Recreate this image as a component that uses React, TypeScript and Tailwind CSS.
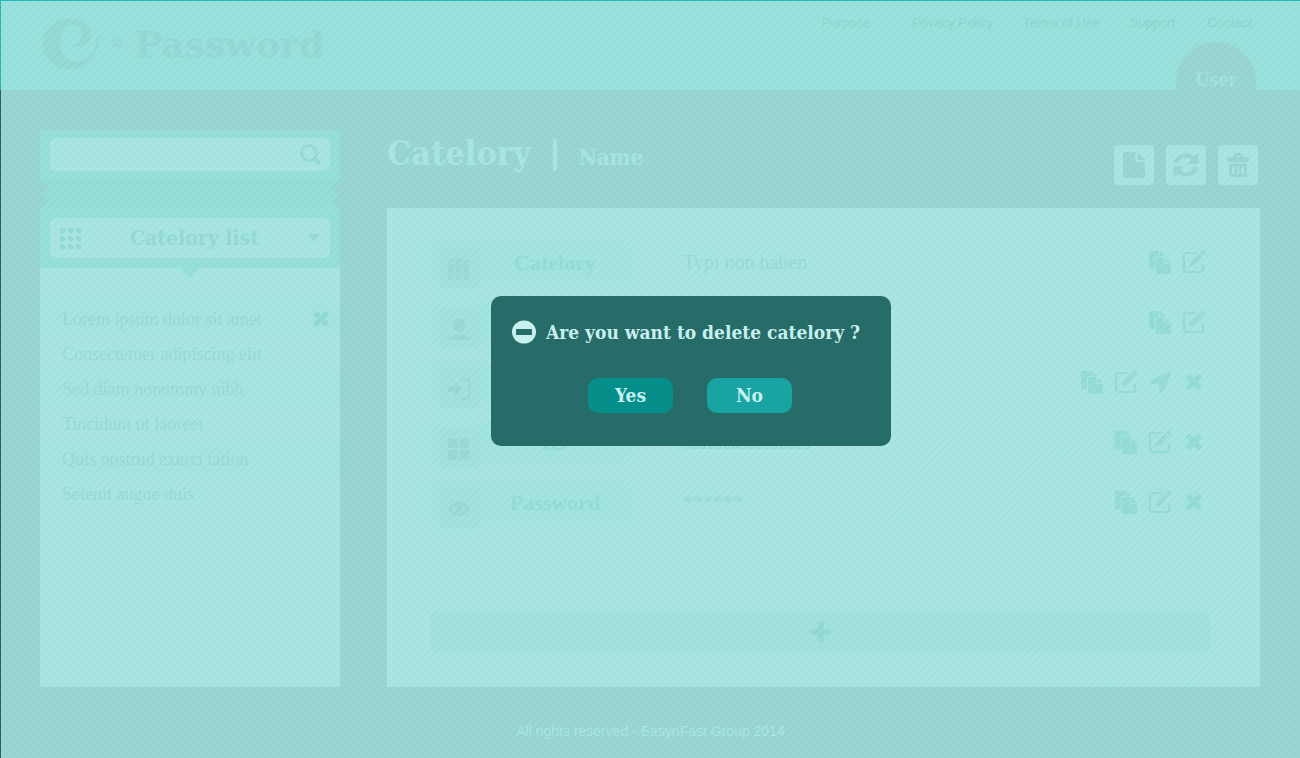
import React from "react";
import { FaLocationArrow } from "react-icons/fa";

const slab = "font-['DejaVu_Serif_Condensed','DejaVu_Serif',serif] font-bold";

const logoPath =
  "M29 3C14 3 3 13 3 27C3 42 14 53 29 53C47 53 58 41 60 20L58 20C56 35 49 45 37 45C26 45 20 38 20 27C20 15 25 9 33 9C40 9 42 12 42 17C42 24 38 29 31 30C42 33 51 28 51 19C51 9 42 3 29 3z";

function Edit() {
  return (
    <svg viewBox="0 0 24 24" className="size-6" fill="none" stroke="currentColor" aria-hidden="true">
      <path d="M14 3H4.500Q2 3 2 5.500V19.500Q2 22 4.500 22H18.500Q21 22 21 19.500V14" strokeWidth="2.200" />
      <path d="M7 17l2-5.500 8-8 3.500 3.500-8 8z" fill="currentColor" stroke="none" />
      <path d="M18 2.500l1.500-1.500q1.500-1 3 .5t.5 3L21.500 6z" fill="currentColor" stroke="none" />
    </svg>
  );
}

function Copy() {
  return (
    <svg viewBox="0 0 24 24" className="size-6" fill="currentColor" aria-hidden="true">
      <path d="M2 1h9v5H8.500Q7 6 7 7.500V19H2Q1 19 1 18V2Q1 1 2 1zM12 1l5 5h-5z" />
      <path d="M9 7h7v7H23v9q0 1-1 1H9q-1 0-1-1V8q0-1 1-1zM17 7.500l6 5.500h-6z" />
    </svg>
  );
}

function Cross() {
  return (
    <svg viewBox="0 0 18 18" className="size-[18px]" fill="none" stroke="currentColor" strokeWidth="5.500" aria-hidden="true">
      <path d="M2.500 2.500L15.500 15.500M15.500 2.500L2.500 15.500" />
    </svg>
  );
}

function Plus() {
  return (
    <svg viewBox="0 0 20 20" className="size-5" fill="currentColor" aria-hidden="true">
      <path d="M8 0h4q1 0 1 1v6h6q1 0 1 1v4q0 1-1 1h-6v6q0 1-1 1H8q-1 0-1-1v-6H1q-1 0-1-1V8q0-1 1-1h6V1q0-1 1-1z" />
    </svg>
  );
}

function Search() {
  return (
    <svg viewBox="0 0 22 22" className="size-[22px]" fill="none" stroke="currentColor" aria-hidden="true">
      <circle cx="9" cy="9" r="7.500" strokeWidth="2.500" />
      <path d="M14.500 14.500L20 20" strokeWidth="4" />
    </svg>
  );
}

function File() {
  return (
    <svg viewBox="0 0 22 26" className="h-[26px] w-[22px]" fill="currentColor" aria-hidden="true">
      <path d="M1.500 0H12.500V10H22V24.500Q22 26 20.500 26H1.500Q0 26 0 24.500V1.500Q0 0 1.500 0zM14.500 0L22 8H14.500z" />
    </svg>
  );
}

function Refresh() {
  return (
    <svg viewBox="0 0 26 26" className="size-6.5" fill="currentColor" aria-hidden="true">
      <path d="M1 11C2 5 7 1.500 13 1.500c3.500 0 6 1.200 8 3.300L25.500 1v11H15l3.500-3.700C17 6.500 15 5.500 13 5.500c-4 0-6.500 2-7.500 5.500z" />
      <path d="M25 15c-1 6-6 9.500-12 9.500-3.500 0-6-1.200-8-3.300L.5 25V14H11l-3.500 3.700c1.500 1.800 3.500 2.800 5.500 2.800 4 0 6.500-2 7.500-5.500z" />
    </svg>
  );
}

function Trash() {
  return (
    <svg viewBox="0 0 24 26" className="h-6.5 w-6" fill="currentColor" fillRule="evenodd" aria-hidden="true">
      <path d="M7.500 5V3.500Q7.500 1 10 1h4q2.500 0 2.500 2.500V5H21q2 0 2 2v3H1V7q0-2 2-2zM10 5h4V3.500h-4z" />
      <path d="M3 11.500h18V23q0 2-2 2H5q-2 0-2-2zM6 14.500V22h2.500v-7.500zM10.800 14.500V22h2.500v-7.500zM15.500 14.500V22H18v-7.500z" />
    </svg>
  );
}

const rowIcons: Record<string, React.ReactNode> = {
  books: (
    <path d="M1 2h6v3H1zM1 6h6v11H1zM1 18h6v1.500H1zM1 20.500h6V23H1zM8.500 1h6.500v3H8.500zM8.500 5h6.500v12H8.500zM8.500 18h6.500v1.500H8.500zM8.500 20.500h6.500V23H8.500zM16.500 3H23v3h-6.500zM16.500 7H23v10h-6.500zM16.500 18H23v1.500h-6.500zM16.500 20.500H23V23h-6.500z" />
  ),
  person: (
    <>
      <ellipse cx="13" cy="8" rx="6" ry="7.500" />
      <path d="M1 23c1-4 5-4 8-5.500q4 2 8 0c3 1.500 6 1.500 7 5.500z" />
    </>
  ),
  enter: (
    <>
      <path d="M1 9h7V4l7.500 8L8 20v-5H1z" />
      <path d="M14 2h7q2 0 2 2v16q0 2-2 2h-7" fill="none" stroke="currentColor" strokeWidth="2" />
    </>
  ),
  grid: (
    <path d="M2 1h9v10H1V2q0-1 1-1zM13 1h9q1 0 1 1v9H13zM1 13h10v10H2q-1 0-1-1zM13 13h10v9q0 1-1 1h-9z" />
  ),
  eye: (
    <path fillRule="evenodd" d="M1 12C4 7 8 4.500 12.500 4.500S21 7 24 12c-3 5-7 7.500-11.500 7.500S4 17 1 12zM5 12c2 3.500 4.500 5 7.500 5s5.500-1.500 7.500-5c-2-3.500-4.500-5-7.500-5S7 8.500 5 12zM12.500 8a4 4 0 1 0 .01 8 4 4 0 1 0-.01-8z" />
  ),
};

const rows = [
  { icon: "books", label: "Catelory", value: "Typi non haben", actions: ["Copy", "Edit"] },
  { icon: "person", label: "", value: "", actions: ["Copy", "Edit"] },
  { icon: "enter", label: "", value: "", actions: ["Copy", "Edit", "Open", "Delete"] },
  { icon: "grid", label: "ID", value: "namkschemmes", actions: ["Copy", "Edit", "Delete"] },
  { icon: "eye", label: "Password", value: "******", actions: ["Copy", "Edit", "Delete"] },
];

const actionIcons: Record<string, React.ReactNode> = {
  Copy: <Copy />,
  Edit: <Edit />,
  Open: <FaLocationArrow className="size-[21px]" />,
  Delete: <Cross />,
};

const items = [
  "Lorem ipsum dolor sit amet",
  "Consectetuer adipiscing elit",
  "Sed diam nonummy nibh",
  "Tincidunt ut laoreet",
  "Quis nostrud exerci tation",
  "Selenit augue duis",
];

function Header() {
  return (
    <header className="relative flex h-[90px] items-start justify-between border-t border-l border-[#23b9b5] bg-[#9ae0dd] pr-12 pl-[39px]">
      <a href="#home" className="flex items-center pt-[15px] text-[#94d9d6]">
        <svg viewBox="0 0 61 56" className="h-[56px] w-[61px]" fill="currentColor" aria-hidden="true">
          <path d={logoPath} />
        </svg>
        <span className="w-6 pl-2.5 font-['DejaVu_Sans',sans-serif] text-base leading-none">✲</span>
        <span className="pl-2.5 font-['DejaVu_Serif',serif] text-4xl leading-none font-bold">Password</span>
      </a>
      <nav className="flex pt-3 font-['Liberation_Sans',sans-serif] text-[13px] leading-5 text-[#8ed4d0]">
        <a href="#purpose" className="mr-[42px]">Purpose</a>
        <a href="#privacy" className="mr-[30px]">Privacy Policy</a>
        <a href="#terms" className="mr-[30px]">Terms of Use</a>
        <a href="#support" className="mr-8">Support</a>
        <a href="#contact">Contact</a>
      </nav>
      <a href="#user" className={`absolute right-11 bottom-0 flex h-12 w-20 items-end justify-center rounded-t-full bg-[#98d5d3] text-lg leading-5 text-[#a0e4e1] ${slab}`}>
        User
      </a>
    </header>
  );
}

function Sidebar() {
  return (
    <aside className="flex w-[300px] shrink-0 flex-col">
      <div className="bg-[#97dfdb] px-2.5 pt-2 pb-[9px]">
        <label className="flex h-[33px] items-center rounded-md bg-[#a8e5e2] pr-2 text-[#93dad6]">
          <input type="text" aria-label="Search" className="h-full min-w-0 flex-1 bg-transparent px-3 outline-none" />
          <Search />
        </label>
      </div>
      <div className="h-7 bg-[#95ddd9] [clip-path:polygon(0_0,100%_0,97%_27%,100%_50%,97%_75%,100%_100%,0_100%,3%_75%,0_50%,3%_27%)]" />
      <div className="relative bg-[#97dfdb] p-2.5">
        <button type="button" className="flex h-10 w-full items-center justify-between rounded-md bg-[#a8e5e2] px-2.5 text-[#93dad6]">
          <svg viewBox="0 0 21 21" className="size-[21px]" fill="currentColor" aria-hidden="true">
            {[0, 8, 16].map((y) => [0, 8, 16].map((x) => <rect key={`${x}-${y}`} x={x} y={y} width="5" height="5" rx="1" />))}
          </svg>
          <span className={`text-[21px] ${slab}`}>Catelory list</span>
          <svg viewBox="0 0 12 8" className="h-2 w-3" fill="currentColor" aria-hidden="true">
            <path d="M0 0h12L6 8z" />
          </svg>
        </button>
        <div className="absolute top-full left-[140px] h-2.5 w-5 bg-[#97dfdb] [clip-path:polygon(0_0,100%_0,50%_100%)]" />
      </div>
      <div className="flex-1 bg-[#a8e5e2] pt-[33px] font-['Liberation_Serif',serif] text-lg text-[#96dbd7]">
        <ul>
          {items.map((item) => (
            <li key={item} className="flex h-[35px] items-center justify-between pr-2.5 pl-[22px] odd:bg-[#a6e4e1] first:bg-[#a2e2df]">
              <a href="#item">{item}</a>
              {item === items[0] && (
                <button type="button" aria-label="Remove" className="text-[#93dad6]"><Cross /></button>
              )}
            </li>
          ))}
        </ul>
      </div>
    </aside>
  );
}

function Content() {
  return (
    <main className="flex min-w-0 flex-1 flex-col">
      <div className="flex h-[78px] justify-between pr-0.5">
        <div className={`flex items-baseline text-[#a8e5e2] ${slab}`}>
          <h1 className="text-[34px] leading-[46px]">Catelory</h1>
          <span className="mt-[9px] ml-[22px] h-8 w-1 self-start bg-[#a8e5e2]" />
          <h2 className="ml-[22px] text-[22px]">Name</h2>
        </div>
        <div className="flex gap-3 pt-[15px] text-[#98d5d3]">
          <button type="button" aria-label="New" className="flex size-10 items-center justify-center rounded bg-[#a8e5e2]"><File /></button>
          <button type="button" aria-label="Refresh" className="flex size-10 items-center justify-center rounded bg-[#a8e5e2]"><Refresh /></button>
          <button type="button" aria-label="Delete" className="flex size-10 items-center justify-center rounded bg-[#a8e5e2]"><Trash /></button>
        </div>
      </div>
      <section className="relative flex flex-1 flex-col overflow-hidden bg-[#a8e5e2] pr-[50px] pl-11 font-['Liberation_Serif',serif]">
        <svg viewBox="0 0 60 54" className="absolute right-0 -bottom-[53px] h-[351px] w-[390px] text-[#a6e3e2]" fill="currentColor" aria-hidden="true">
          <path d={logoPath} />
        </svg>
        <div className="relative flex flex-col gap-5 pt-[34px]">
          {rows.map((row) => (
            <div key={row.icon} className="flex h-10 items-center">
              <div className="flex h-10 w-[200px] bg-[#a3e3e0]">
                <div className="mt-[7px] ml-2 flex size-10 shrink-0 items-center justify-center rounded-sm bg-[#a1e1de] text-[#98d9d6]">
                  <svg viewBox="0 0 25 24" className="size-6" fill="currentColor" aria-hidden="true">{rowIcons[row.icon]}</svg>
                </div>
                <h3 className="flex flex-1 items-center justify-center text-[22px] font-bold text-[#95dbd7]">{row.label}</h3>
              </div>
              <div className="ml-[34px] flex h-10 flex-1 items-center justify-between bg-[#a6e4e1]/50 pr-1 pl-[18px] text-xl text-[#95dbd7]">
                <span>{row.value}</span>
                <div className="flex gap-2.5">
                  {row.actions.map((a) => (
                    <button key={a} type="button" aria-label={a} className="flex size-6 items-center justify-center text-[#95dcd8]">{actionIcons[a]}</button>
                  ))}
                </div>
              </div>
            </div>
          ))}
        </div>
        <button type="button" aria-label="Add" className="relative mt-auto mb-[35px] flex h-10 shrink-0 items-center justify-center rounded-sm bg-[#a2e1de] text-[#93dad6]">
          <Plus />
        </button>
      </section>
    </main>
  );
}

export default function App() {
  return (
    <div className="relative flex min-h-screen flex-col bg-[#98d5d3]">
      <Header />
      <div className="flex flex-1 gap-[47px] border-l border-[#2a605e] pt-10 pr-10 pl-[39px]">
        <Sidebar />
        <Content />
      </div>
      <footer className="border-l border-[#2a605e] pt-[34px] pb-[17px] text-center font-['Liberation_Sans',sans-serif] text-sm text-[#aae6e3]">
        All rights reserved - EasynFast Group 2014
      </footer>
      <div className="absolute inset-0 flex items-start justify-center bg-[linear-gradient(135deg,transparent_44%,rgba(0,90,90,0.06)_44%,rgba(0,90,90,0.06)_56%,transparent_56%)] bg-size-[8px_8px] pt-[296px] pl-[82px]">
        <div role="dialog" aria-labelledby="dialog-title" className="h-[150px] w-[400px] rounded-[10px] bg-[#276c68] bg-[linear-gradient(135deg,transparent_44%,rgba(0,90,90,0.15)_44%,rgba(0,90,90,0.15)_56%,transparent_56%)] bg-size-[8px_8px] text-[#c8f0ee]">
          <div className="flex items-center gap-2.5 pt-[22px] pl-[21px]">
            <svg viewBox="0 0 24 24" className="size-6 shrink-0" aria-hidden="true">
              <ellipse cx="12" cy="12" rx="12" ry="11.500" fill="currentColor" />
              <rect x="4" y="9" width="16" height="6" rx="0.500" fill="#276c68" />
            </svg>
            <h2 id="dialog-title" className={`text-[19px] leading-7 whitespace-nowrap ${slab}`}>Are you want to delete catelory ?</h2>
          </div>
          <div className={`mt-8 flex justify-center gap-[34px] pr-0.5 text-[19px] ${slab}`}>
            <button type="button" className="h-[35px] w-[85px] rounded-[10px] bg-[#068e8b]">Yes</button>
            <button type="button" className="h-[35px] w-[85px] rounded-[10px] bg-[#19a4a3]">No</button>
          </div>
        </div>
      </div>
    </div>
  );
}
